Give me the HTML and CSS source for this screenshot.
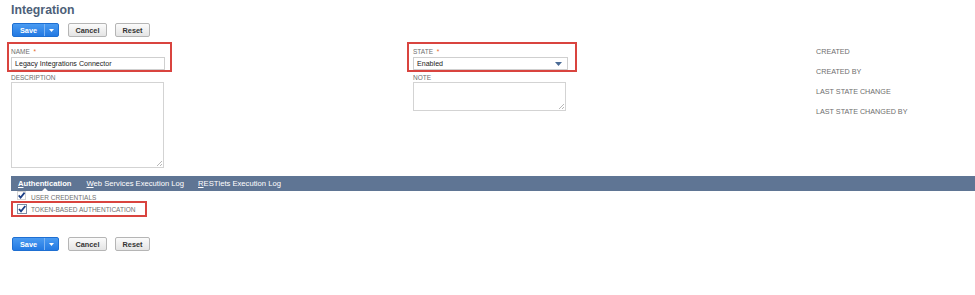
FILE: index.html
```html
<!DOCTYPE html>
<html>
<head>
<meta charset="utf-8">
<link rel="stylesheet" href="styles.css">
</head>
<body>
<div class="page">
  <h1 class="title">Integration</h1>
  <div class="btnbar">
    <div class="btn-primary">
      <span class="btn-main">Save</span>
      <span class="btn-drop"><svg width="5" height="3" viewBox="0 0 5 3"><path d="M0 0H5L2.5 3Z" fill="#fff"/></svg></span>
    </div>
    <span class="btn btn-cancel">Cancel</span>
    <span class="btn btn-reset">Reset</span>
  </div>

  <div class="form">
    <div class="col">
      <div class="field hl hl-name">
        <div class="label">NAME <span class="req">*</span></div>
        <input class="input name-input" type="text" value="Legacy Integrations Connector">
      </div>
      <div class="field">
        <div class="label gap">DESCRIPTION</div>
        <div class="ta-wrap">
          <textarea class="textarea desc"></textarea>
        </div>
      </div>
    </div>
    <div class="col">
      <div class="field hl hl-state">
        <div class="label">STATE <span class="req">*</span></div>
        <div class="select">
          <span>Enabled</span>
          <svg class="arrow" width="7" height="4" viewBox="0 0 7 4"><path d="M0 0H7L3.5 4Z" fill="#4a6a95"/></svg>
        </div>
      </div>
      <div class="field">
        <div class="label gap">NOTE</div>
        <div class="ta-wrap">
          <textarea class="textarea note"></textarea>
        </div>
      </div>
    </div>
    <div class="col meta">
      <div class="meta-label">CREATED</div>
      <div class="meta-label">CREATED BY</div>
      <div class="meta-label">LAST STATE CHANGE</div>
      <div class="meta-label">LAST STATE CHANGED BY</div>
    </div>
  </div>

  <div class="tabbar">
    <span class="tab active"><u>A</u>uthentication</span>
    <span class="tab"><u>W</u>eb Services Execution Log</span>
    <span class="tab"><u>R</u>ESTlets Execution Log</span>
  </div>

  <div class="checks">
    <div class="check-row first">
      <svg class="cb" width="9" height="9" viewBox="0 0 9 9"><rect x=".5" y=".5" width="8" height="8" fill="#fff" stroke="#d4d4d4"/><path d="M1.7 4.4L3.6 6.6L7.6 1.6" fill="none" stroke="#1c3f86" stroke-width="1.7"/></svg>
      <span class="check-label">USER CREDENTIALS</span>
    </div>
    <div class="check-row hl hl-check">
      <svg class="cb" width="10" height="10" viewBox="0 0 10 10"><rect x=".5" y=".5" width="9" height="9" fill="#fff" stroke="#7f8ea5"/><path d="M2 5L4 7.3L8.3 2" fill="none" stroke="#1c3f86" stroke-width="1.8"/></svg>
      <span class="check-label">TOKEN-BASED AUTHENTICATION</span>
    </div>
  </div>

  <div class="btnbar bottom">
    <div class="btn-primary">
      <span class="btn-main">Save</span>
      <span class="btn-drop"><svg width="5" height="3" viewBox="0 0 5 3"><path d="M0 0H5L2.5 3Z" fill="#fff"/></svg></span>
    </div>
    <span class="btn btn-cancel">Cancel</span>
    <span class="btn btn-reset">Reset</span>
  </div>
</div>
</body>
</html>
```

FILE: styles.css
```css
html, body {
  margin: 0;
  padding: 0;
  background: #ffffff;
}

body {
  font-family: "Liberation Sans", Arial, sans-serif;
  color: #333;
}

.page {
  padding: 3px 0 0 11px;
}

.title {
  margin: 0;
  font-size: 12.3px;
  line-height: 15px;
  font-weight: bold;
  color: #4d5f79;
}

/* buttons */
.btnbar {
  display: flex;
  align-items: stretch;
  height: 14px;
  margin-top: 5px;
  padding-left: 1px;
}

.btnbar.bottom {
  margin-top: 20px;
}

.btn-primary {
  display: flex;
  height: 14px;
  border: 1px solid #1e6fd2;
  border-radius: 2px;
  box-sizing: border-box;
  background: linear-gradient(#4a9bf2, #2379e2);
  overflow: hidden;
}

.btn-main {
  width: 31px;
  display: flex;
  align-items: center;
  justify-content: center;
  color: #fff;
  font-size: 7.3px;
  font-weight: bold;
}

.btn-drop {
  width: 13px;
  display: flex;
  align-items: center;
  justify-content: center;
  border-left: 1px solid #7fb5f3;
}

.btn {
  display: flex;
  align-items: center;
  justify-content: center;
  height: 14px;
  box-sizing: border-box;
  border: 1px solid #b5b5b5;
  border-radius: 2px;
  background: linear-gradient(#fbfbfb, #e4e4e4);
  color: #333;
  font-size: 7.3px;
  font-weight: bold;
}

.btn-cancel {
  width: 39px;
  margin-left: 9px;
}

.btn-reset {
  width: 35px;
  margin-left: 8px;
}

/* form */
.form {
  display: grid;
  grid-template-columns: 402px 403px 1fr;
  margin-top: 5px;
}

.field {
  display: block;
}

.hl {
  border: 2px solid #d9443f;
}

.hl-name {
  margin-left: -4px;
  padding: 4px 5px 0 2px;
  width: 154px;
}

.hl-state {
  margin-left: -6px;
  padding: 4px 7px 0 4px;
  width: 155px;
}

.label {
  font-size: 6.5px;
  line-height: 8px;
  color: #6e6e6e;
  margin-bottom: 1px;
  white-space: nowrap;
}

.label.gap {
  margin-top: 2px;
  margin-bottom: 0;
}

.req {
  color: #e8641e;
  margin-left: 2px;
}

.input {
  display: block;
  width: 154px;
  height: 13px;
  box-sizing: border-box;
  margin: 0;
  padding: 0 3px;
  border: 1px solid #cfcfcf;
  font-family: "Liberation Sans", Arial, sans-serif;
  font-size: 7.1px;
  color: #222;
  outline: none;
}

.select {
  display: flex;
  align-items: center;
  justify-content: space-between;
  width: 155px;
  height: 13px;
  box-sizing: border-box;
  padding: 0 5px 0 3px;
  border: 1px solid #cfcfcf;
  font-size: 7.1px;
  color: #222;
}

.ta-wrap {
  position: relative;
  width: 153px;
}

.ta-wrap::after {
  content: "";
  position: absolute;
  right: 2px;
  bottom: 2px;
  width: 5px;
  height: 5px;
  background: linear-gradient(135deg,
    transparent 0 45%, #b8b8b8 45% 55%, transparent 55% 72%,
    #b8b8b8 72% 82%, transparent 82%);
}

.textarea {
  display: block;
  box-sizing: border-box;
  margin: 0;
  padding: 2px 3px;
  border: 1px solid #d3d3d3;
  font-family: "Liberation Sans", Arial, sans-serif;
  font-size: 7px;
  resize: none;
  outline: none;
}

.textarea.desc {
  width: 153px;
  height: 86px;
}

.textarea.note {
  width: 153px;
  height: 29px;
}

.meta {
  padding-top: 5px;
}

.meta-label {
  font-size: 7.2px;
  line-height: 9px;
  color: #6e6e6e;
  margin-bottom: 11px;
  white-space: nowrap;
}

/* tabs */
.tabbar {
  display: flex;
  height: 15px;
  margin-top: 8px;
  background: #5f7594;
}

.tab {
  position: relative;
  padding: 0 7px;
  font-size: 7.65px;
  line-height: 15px;
  color: #ffffff;
  white-space: nowrap;
}

.tab.active {
  font-weight: bold;
  margin-right: 1px;
}

.tab.active::after {
  content: "";
  position: absolute;
  left: 50%;
  bottom: 0;
  margin-left: -3px;
  border-left: 3px solid transparent;
  border-right: 3px solid transparent;
  border-bottom: 3px solid #ffffff;
}

/* checkboxes */
.checks {
  display: flex;
  flex-direction: column;
  align-items: flex-start;
}

.check-row {
  display: flex;
  align-items: center;
}

.check-row.first {
  height: 10px;
  padding-left: 6px;
}

.check-row.first .cb {
  margin-top: -2px;
}

.hl-check {
  height: 12px;
  padding: 0 9px 0 4px;
}

.cb {
  display: block;
  flex: none;
}

.check-label {
  font-size: 6.5px;
  color: #707070;
  margin-left: 4px;
  white-space: nowrap;
  line-height: 10px;
}

.check-row.first .check-label {
  margin-left: 5px;
  margin-top: 4px;
}

.hl-check .check-label {
  margin-top: 2px;
}
```
